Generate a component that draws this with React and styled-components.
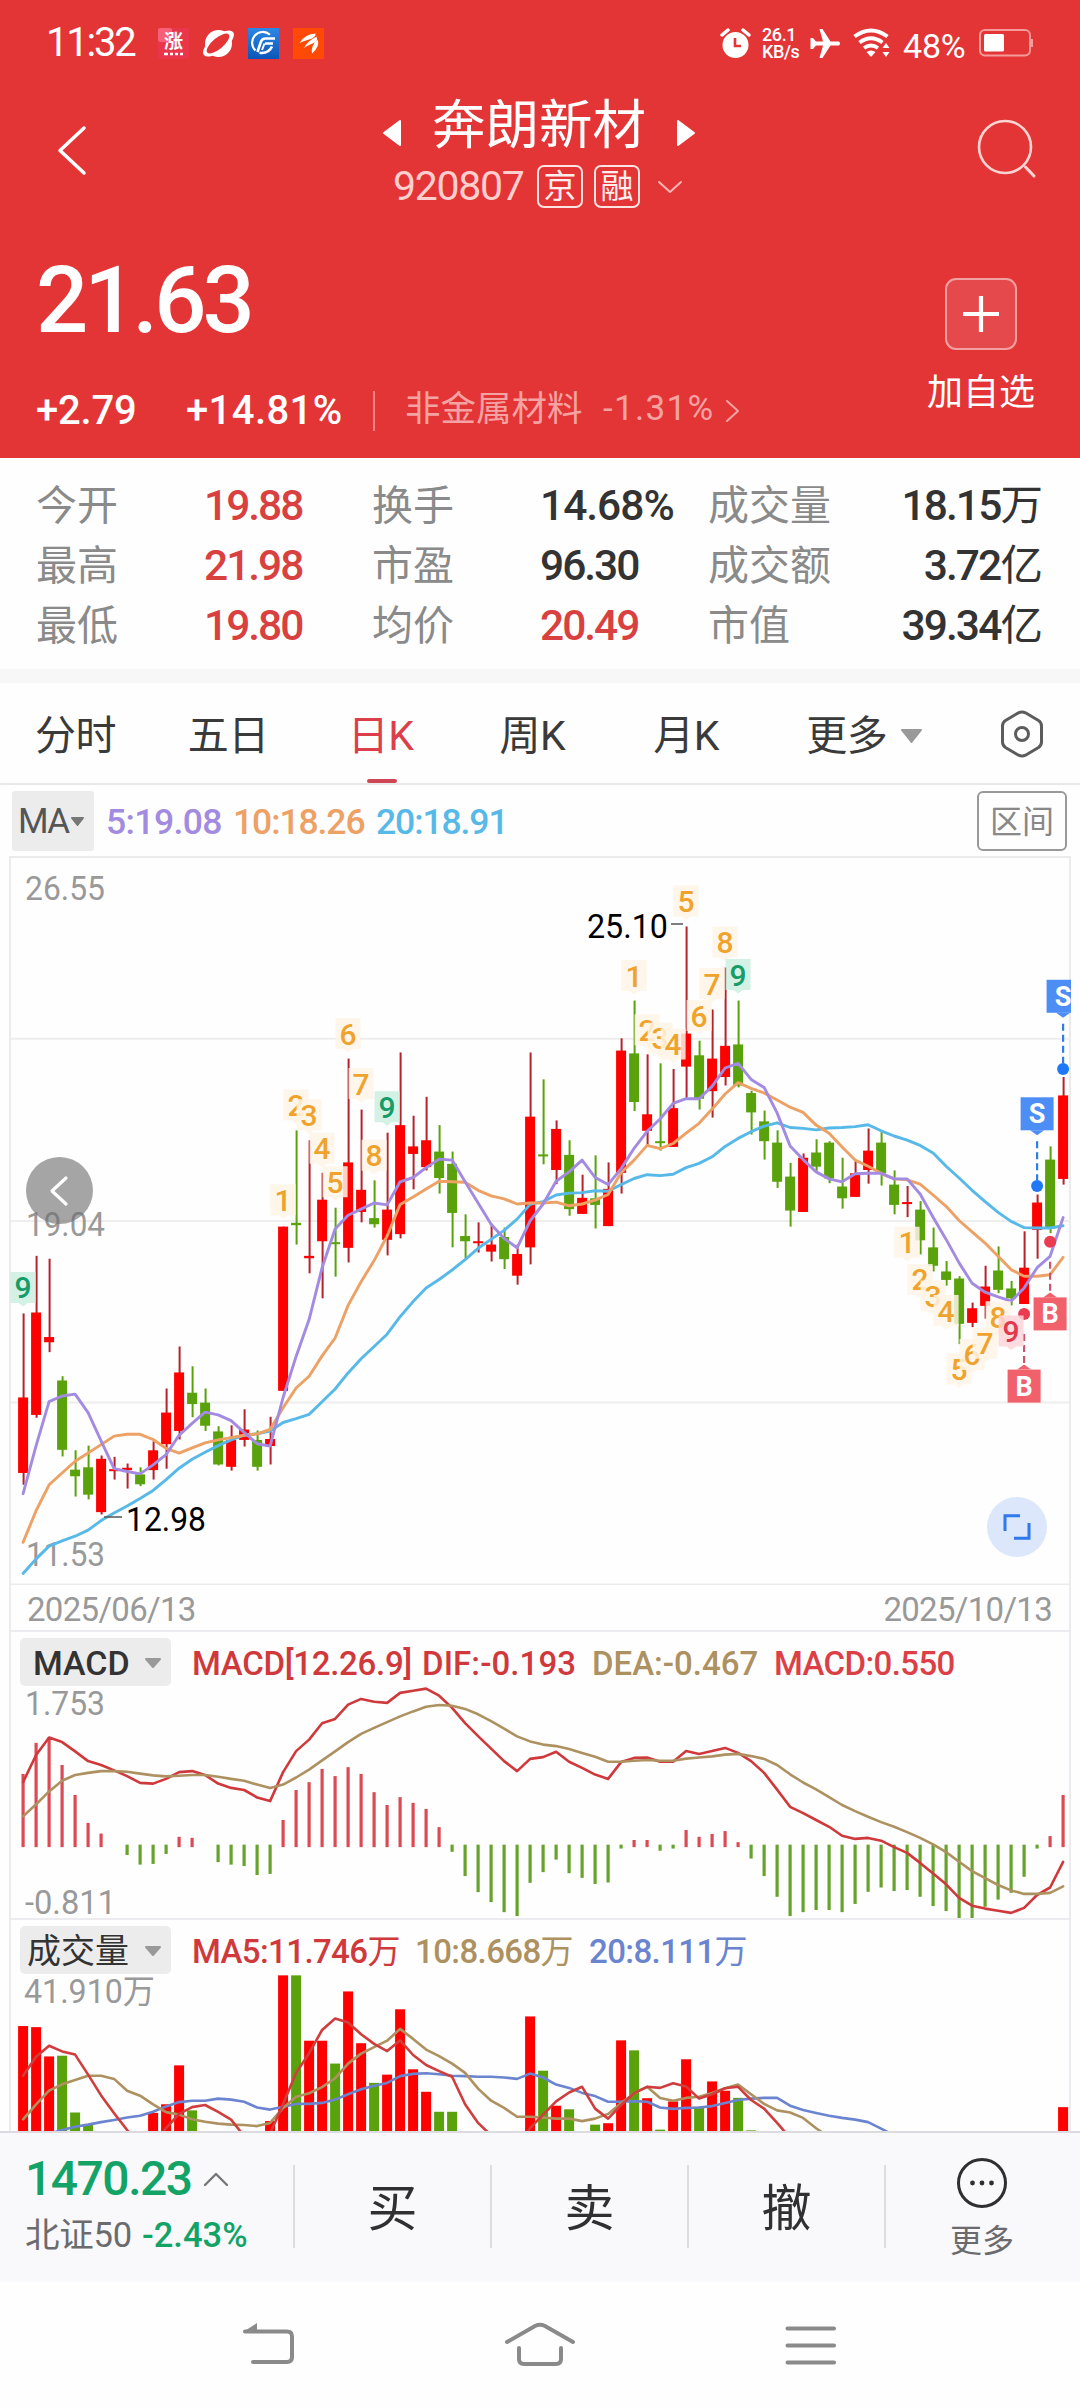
import React from "react";
import styled, { createGlobalStyle, css } from "styled-components";

const UP = "#fe0000";
const DOWN = "#5aa20b";
const RED = "#d8413f";
const GREY = "#999";
const MA5 = "#a28be0";
const MA10 = "#eda164";
const MA20 = "#57b9e8";
const OLIVE = "#ad9160";
const FONT = 'Roboto, "Noto Sans CJK SC", sans-serif';

const GlobalStyle = createGlobalStyle`
  body { margin: 0; background: #fefefe; }
  * { box-sizing: border-box; }
  svg { display: block; flex: none; }
  button { all: unset; box-sizing: border-box; display: block; }
`;

const type = css`
  font-size: ${(p) => p.$size}px;
  font-weight: ${(p) => p.$weight || 400};
  letter-spacing: ${(p) => p.$ls || 0}px;
  color: ${(p) => p.$color || "inherit"};
  white-space: nowrap;
`;

const Page = styled.div`
  width: 1080px;
  height: 2408px;
  display: flex;
  flex-direction: column;
  font-family: ${FONT};
  background: #fefefe;
  overflow: hidden;
`;
const Unit = styled.span`
  font-weight: 400;
`;

/* ---------- header ---------- */
const Header = styled.header`
  height: 458px;
  background: #e33536;
  color: #fff;
`;
const StatusBar = styled.div`
  height: 86px;
  padding: 0 47px 0 46px;
  display: flex;
  align-items: center;
  justify-content: space-between;
`;
const StatusGroup = styled.div`
  display: flex;
  align-items: center;
  gap: ${(p) => p.$gap}px;
`;
const Clock = styled.span`
  ${type}
  width: 98px;
  line-height: 40px;
`;
const NetSpeed = styled.span`
  width: 37px;
  display: flex;
  flex-direction: column;
  font-size: 18px;
  font-weight: 500;
  line-height: 17px;
  letter-spacing: -0.4px;
  white-space: nowrap;
`;
const Percent = styled.span`
  ${type}
  line-height: 40px;
  padding-top: 6px;
  width: 65px;
`;
const TitleRow = styled.div`
  height: 136px;
  padding: 0 45px 0 54px;
  display: flex;
`;
const TitleSide = styled.div`
  width: 58px;
  padding-top: ${(p) => p.$top}px;
`;
const TitleBlock = styled.div`
  flex: 1;
  padding-top: 2px;
  padding-right: 11px;
  display: flex;
  flex-direction: column;
  align-items: center;
`;
const NameRow = styled.div`
  height: 74px;
  display: flex;
  align-items: center;
  gap: 31px;
`;
const Name = styled.h1`
  margin: 0;
  line-height: 74px;
  padding-top: 2px;
  ${type}
`;
const ArrowSlot = styled.div`
  padding-top: 16px;
`;
const CodeRow = styled.div`
  height: 48px;
  padding-right: 2px;
  display: flex;
  align-items: center;
  color: #ffcfce;
`;
const Code = styled.span`
  ${type}
  line-height: 48px;
  width: 144px;
`;
const Badge = styled.span`
  width: 46px;
  height: 43px;
  margin-right: 11px;
  border: 2px solid #ffe3e2;
  border-radius: 7px;
  font-size: 33px;
  line-height: 39px;
  color: #ffeeed;
  text-align: center;
`;
const QuoteRow = styled.div`
  display: flex;
  justify-content: space-between;
  padding: 0 44px 0 36px;
`;
const Quote = styled.div`
  padding-top: 29px;
`;
const Price = styled.div`
  ${type}
  line-height: 100px;
`;
const ChangeRow = styled.div`
  margin-top: 34px;
  height: 52px;
  display: flex;
  align-items: center;
`;
const Change = styled.span`
  ${type}
  width: ${(p) => p.$w}px;
  line-height: 52px;
`;
const Sector = styled.span`
  ${type}
  width: ${(p) => p.$w}px;
  margin-left: ${(p) => p.$gap || 0}px;
  padding-bottom: 4px;
  line-height: 48px;
  color: #f5a3a2;
`;
const Rule = styled.i`
  width: 2px;
  height: ${(p) => p.$h}px;
  background: ${(p) => p.$tone};
`;
const AddBox = styled.div`
  padding-top: 56px;
  width: 110px;
  display: flex;
  flex-direction: column;
  align-items: center;
`;
const AddIcon = styled.div`
  width: 72px;
  height: 72px;
  border: 2px solid #f1a1a0;
  border-radius: 11px;
  background: #e6494b;
  display: grid;
  place-items: center;
`;
const AddLabel = styled.span`
  ${type}
  line-height: 50px;
  margin-top: 18px;
`;

/* ---------- stats ---------- */
const Stats = styled.section`
  height: 211px;
  padding: 18px 39px 0 36px;
  display: grid;
  grid-template-columns: 168px 168px 168px 168px 1fr;
  grid-auto-rows: 60px;
`;
const StatLabel = styled.span`
  ${type}
  line-height: 60px;
`;
const StatValue = styled.span`
  ${type}
  line-height: 60px;
`;
const LastCell = styled.div`
  display: flex;
  justify-content: space-between;
`;
const Band = styled.div`
  height: 14px;
  background: #f7f7f7;
`;

/* ---------- tabs ---------- */
const Tabs = styled.nav`
  height: 102px;
  padding: 0 36px 0 35px;
  display: flex;
  border-bottom: 2px solid #e8e8e8;
`;
const Tab = styled.div`
  width: ${(p) => p.$w}px;
  display: flex;
  flex-direction: column;
  justify-content: space-between;
  align-items: flex-start;
  color: ${(p) => (p.$on ? "#dc3f49" : "#3a3a3a")};
  font-size: 41px;
  letter-spacing: -0.5px;
`;
const TabText = styled.span`
  height: 96px;
  padding-top: 9px;
  line-height: 60px;
  display: flex;
  align-items: center;
  gap: 14px;
  white-space: nowrap;
`;
const Underline = styled.i`
  width: 30px;
  height: 4px;
  margin-left: 19px;
  border-radius: 2px;
  background: #cf4653;
`;
const TabIcon = styled.div`
  padding-top: 27px;
`;

/* ---------- chart blocks ---------- */
const MaRow = styled.div`
  height: 71px;
  padding: 0 13px 0 12px;
  display: flex;
  align-items: center;
`;
const MaSelect = styled.div`
  width: 82px;
  height: 60px;
  padding: 2px 0 0 6px;
  display: flex;
  align-items: center;
  gap: 2px;
  background: #ececec;
  border-radius: 3px;
  color: #555;
  font-size: 35px;
  letter-spacing: -1.5px;
`;
const MaValue = styled.span`
  ${type}
  width: ${(p) => p.$w}px;
  margin-left: 12px;
  padding-top: 2px;
  line-height: 60px;
`;
const RangeButton = styled.button`
  margin-left: auto;
  width: 90px;
  height: 60px;
  border: 2px solid #999;
  border-radius: 6px;
  font-size: 32px;
  line-height: 58px;
  text-align: center;
  color: #888;
`;
const KPanel = styled.section`
  position: relative;
  height: 729px;
`;
const PrevButton = styled.button`
  position: absolute;
  left: 26px;
  top: 301px;
  width: 67px;
  height: 67px;
  border-radius: 50%;
  background: rgba(110, 110, 110, 0.62);
  display: grid;
  place-items: center;
`;
const ExpandButton = styled.button`
  position: absolute;
  left: 987px;
  top: 641px;
  width: 60px;
  height: 60px;
  border-radius: 50%;
  background: #dce7fb;
  display: grid;
  place-items: center;
`;
const Framed = styled.div`
  margin: 0 9px 0 9px;
  border: solid #ececf0;
  border-width: 0 2px 0 2px;
`;
const DateRow = styled(Framed)`
  height: 47px;
  padding: 2px 17px 0 16px;
  display: flex;
  justify-content: space-between;
  border-bottom-width: 2px;
  font-size: 33px;
  line-height: 45px;
  letter-spacing: -0.7px;
  color: ${GREY};
`;
const IndicatorHead = styled.div`
  height: 55px;
  padding: 4px 0 0 9px;
  display: flex;
  align-items: center;
`;
const Chip = styled.div`
  width: 151px;
  height: 48px;
  margin-right: 21px;
  padding: 3px 10px 0 ${(p) => p.$pad}px;
  display: flex;
  align-items: center;
  justify-content: space-between;
  background: #ececec;
  border-radius: 5px;
  color: #333;
  font-size: 34px;
  font-weight: ${(p) => p.$weight || 400};
  line-height: 44px;
  white-space: nowrap;
`;
const IndicatorValue = styled.span`
  ${type}
  width: ${(p) => p.$w}px;
  padding-top: 4px;
  line-height: 44px;
`;
const Indicator = styled(Framed)`
  height: ${(p) => p.$h}px;
  border-bottom-width: ${(p) => (p.$line ? 2 : 0)}px;
  overflow: hidden;
`;
const Plot = styled.div`
  height: ${(p) => p.$h}px;
  margin: 0 -11px;
`;

/* ---------- bottom ---------- */
const TradeBar = styled.footer`
  height: 151px;
  border-top: 2px solid #dcdce0;
  background: #f9f9fb;
  display: flex;
  align-items: flex-start;
`;
const IndexBox = styled.div`
  width: 293px;
  padding: 15px 0 0 25px;
`;
const IndexRow = styled.div`
  height: ${(p) => p.$h}px;
  display: flex;
  align-items: center;
`;
const IndexText = styled.span`
  ${type}
  width: ${(p) => p.$w}px;
  line-height: 50px;
`;
const BarRule = styled(Rule)`
  margin-top: 32px;
`;
const Action = styled.button`
  width: 195px;
  line-height: 152px;
  font-size: 50px;
  color: #303033;
  text-align: center;
`;
const MoreBox = styled.div`
  flex: 1;
  padding-top: 24px;
  padding-right: 2px;
  display: flex;
  flex-direction: column;
  align-items: center;
  font-size: 32px;
  color: #6b6b6e;
  line-height: 44px;
  gap: 10px;
`;
const NavBar = styled.div`
  height: 126px;
  display: flex;
  justify-content: space-between;
  padding: 39px 243px 0 241px;
`;

/* ---------- data ---------- */
const STEP = 13;
const X0 = 23.1;
const px = (i) => X0 + i * STEP;
const KY = (v) => v * 0.47194 - 6;

// high, body top, body bottom, low, rising
const candles = [
  [982,1160,1320,1345,1],[860,980,1197,1203,1],[866,1032,1043,1064,1],[1115,1124,1271,1285,0],[1272,1313,1327,1370,0],
  [1262,1308,1366,1376,0],[1283,1290,1403,1408,1],[1286,1312,1316,1334,1],[1300,1309,1314,1353,1],[1308,1323,1344,1348,0],
  [1253,1272,1314,1334,1],[1141,1192,1259,1311,1],[1052,1107,1231,1249,1],[1094,1150,1174,1202,0],[1141,1171,1220,1231,0],
  [1221,1232,1302,1304,0],[1219,1250,1307,1315,1],[1185,1228,1250,1264,1],[1230,1250,1307,1315,0],[1201,1248,1263,1302,1],
  [798,798,1146,1146,1],[594,790,795,836,0],[615,860,865,897,1],[684,741,829,950,1],[758,831,834,904,0],
  [442,662,843,874,1],[550,720,767,789,1],[700,780,793,800,0],[599,762,826,859,1],[429,583,814,823,1],
  [563,628,644,719,1],[523,615,672,679,1],[583,639,695,728,0],[639,665,769,842,0],[772,818,829,865,0],
  [789,829,832,853,1],[792,836,851,872,1],[800,820,867,888,0],[836,856,902,921,1],[429,565,842,878,1],
  [486,645,648,666,0],[573,591,678,708,1],[615,646,761,775,0],[688,737,771,771,1],[647,738,752,802,0],
  [662,718,797,797,1],[399,425,684,728,1],[319,431,534,553,0],[433,560,595,627,1],[452,617,621,637,0],
  [464,547,629,629,1],[162,389,459,525,1],[404,435,527,550,0],[338,442,511,567,1],[249,415,481,499,1],
  [319,412,499,503,0],[510,515,556,603,0],[552,575,617,656,0],[594,620,703,716,0],[663,692,764,798,0],
  [643,652,767,767,1],[613,641,671,680,0],[617,620,696,706,0],[652,713,738,760,0],[659,685,735,735,1],
  [590,637,678,707,1],[598,620,686,711,0],[679,709,752,772,0],[712,746,750,778,1],[744,762,827,857,0],
  [800,842,881,893,0],[871,893,911,923,0],[903,908,1004,1047,0],[959,971,1002,1011,1],[881,925,966,993,1],
  [840,891,932,939,0],[913,929,950,965,0],[808,885,962,962,1],[730,747,805,866,1],[628,656,802,812,0],[481,520,697,709,1],
];
const ma5 = [1364,1262,1169,1157,1153,1192,1252,1311,1317,1322,1303,1281,1240,1215,1191,1197,1209,1234,1258,1263,1160,1073,995,885,803,774,761,748,752,703,694,673,655,657,703,748,793,823,843,786,750,702,682,657,694,709,675,632,596,570,537,527,527,501,462,452,486,503,557,627,656,682,697,703,686,685,685,697,697,729,778,825,875,918,937,947,956,928,885,861,779];
const ma10 = [1467,1400,1345,1320,1295,1278,1260,1242,1238,1238,1249,1268,1278,1267,1256,1250,1245,1240,1237,1228,1182,1140,1115,1072,1034,965,915,870,818,751,735,718,702,703,704,721,733,739,750,748,748,746,754,750,742,730,684,657,626,633,622,600,579,549,517,493,505,515,530,545,556,583,600,629,657,670,685,697,699,708,731,755,785,809,833,861,889,903,903,900,863];
const ma20 = [1533,1502,1475,1464,1454,1441,1421,1405,1390,1374,1357,1334,1310,1291,1276,1262,1250,1240,1237,1231,1213,1205,1196,1169,1142,1108,1078,1052,1026,989,957,928,910,890,868,844,825,806,782,751,745,731,727,726,722,723,709,696,688,690,687,673,664,650,628,611,597,585,578,588,590,593,589,588,586,582,595,606,615,626,642,670,695,721,745,768,787,800,801,801,796];

// index, centre, digit, tone
const tags = [
  [0,928,"9","g"],[20,742,"1"],[21,541,"2"],[22,562,"3"],[23,633,"4"],[24,704,"5"],[25,390,"6"],[26,496,"7"],[27,648,"8"],[28,545,"9","g"],
  [47,267,"1"],[48,382,"2"],[49,400,"3"],[50,412,"4"],[51,109,"5"],[52,352,"6"],[53,284,"7"],[54,196,"8"],[55,265,"9","g"],
  [68,832,"1"],[69,911,"2"],[70,946,"3"],[71,977,"4"],[72,1100,"5"],[73,1070,"6"],[74,1046,"7"],[75,990,"8"],
];
const tones = {
  g: ["#ccefe0", "#169c66"],
  r: ["#ffd3d8", "#e0384c"],
  o: ["#fef4e6", "#efa22c"],
};

const DY = (v) => v / 2.8 - 107;
const macdBars = [543,456,441,518,602,680,710,null,770,797,795,767,719,722,null,790,797,801,826,823,672,588,566,529,549,524,543,594,630,608,624,641,692,761,829,874,902,930,941,848,818,783,821,834,851,847,752,728,728,758,752,700,719,711,703,734,780,829,887,941,930,924,924,930,907,873,861,871,868,887,913,927,955,952,915,895,876,831,752,717,602];
const dif = [566,490,441,454,480,507,518,533,549,568,570,557,538,535,546,570,582,588,609,619,538,479,447,401,389,349,333,341,344,316,310,304,324,358,401,437,472,507,535,501,496,481,509,526,545,557,510,498,497,509,509,479,487,479,470,484,507,540,587,635,653,672,691,716,725,722,730,748,764,792,822,852,890,912,920,926,932,918,882,861,789];
const dea = [662,628,592,562,546,540,535,535,537,542,547,550,548,546,546,551,557,562,573,582,573,553,531,505,480,454,431,414,398,382,368,355,350,352,361,376,395,416,438,452,461,465,473,484,495,509,509,506,504,506,506,500,497,494,489,487,493,501,518,544,567,586,608,630,647,663,678,691,706,722,740,762,789,815,835,854,869,879,879,876,858];

const VY = (v) => v / 2.8 - 395;
const volumes = {
  0:[1249,1],1:[1252,1],2:[1334,1],3:[1332,0],4:[1491,0],5:[1525,0],10:[1492,1],11:[1468,1],12:[1359,1],13:[1485,0],
  19:[1515,1],20:[1107,1],21:[1107,0],22:[1290,1],23:[1290,1],24:[1354,0],25:[1152,1],26:[1297,1],27:[1408,0],28:[1385,1],
  29:[1202,1],30:[1370,1],31:[1433,1],32:[1489,0],33:[1489,0],39:[1222,1],40:[1374,0],41:[1472,1],42:[1482,0],44:[1525,0],
  45:[1521,1],46:[1289,1],47:[1317,0],48:[1451,1],49:[1539,0],50:[1460,1],51:[1342,1],52:[1475,0],53:[1404,1],54:[1430,1],
  55:[1450,0],56:[1541,0],80:[1476,1],
};
const vol5 = [1388,1335,1304,1320,1329,1385,1443,1493,1540,1580,1575,1535,1495,1476,1470,1489,1511,1557,1600,1550,1467,1380,1325,1260,1228,1239,1272,1299,1319,1289,1330,1358,1375,1391,1468,1520,1555,1590,1600,1535,1497,1460,1435,1419,1480,1508,1470,1437,1419,1422,1409,1418,1452,1440,1423,1419,1456,1480,1520,1562];
const vol10 = [1510,1468,1430,1412,1400,1388,1388,1397,1430,1444,1468,1490,1497,1510,1517,1522,1525,1526,1529,1520,1478,1447,1437,1420,1395,1354,1326,1308,1290,1257,1285,1315,1333,1354,1380,1424,1458,1478,1503,1503,1505,1508,1508,1515,1508,1495,1465,1437,1419,1450,1458,1450,1447,1436,1423,1413,1440,1467,1485,1491,1506,1535,1560];
const vol20 = [1570,1560,1550,1540,1531,1525,1518,1512,1505,1500,1489,1474,1462,1458,1458,1452,1455,1461,1477,1483,1475,1467,1467,1464,1455,1440,1426,1416,1408,1389,1383,1381,1384,1388,1389,1391,1391,1393,1397,1382,1393,1413,1422,1436,1445,1461,1461,1459,1461,1477,1481,1478,1477,1473,1464,1456,1452,1450,1450,1472,1484,1492,1500,1506,1511,1518,1536,1555];

function Line({ values, y, color, w = 2.9 }) {
  const pts = values.map((v, i) => `${px(i).toFixed(1)},${y(v).toFixed(1)}`).join(" ");
  return <polyline points={pts} fill="none" stroke={color} strokeWidth={w} strokeLinejoin="round" strokeLinecap="round" />;
}

function AxisText({ x, y, children, color = GREY, w, size = 33 }) {
  return (
    <text x={x} y={y + size * 0.357} fontFamily={FONT} fontSize={size} fill={color} textLength={w} lengthAdjust="spacingAndGlyphs">
      {children}
    </text>
  );
}

function Tag({ i, v, label, tone }) {
  const [bg, fg] = tones[tone || "o"];
  const x = px(i);
  const y = KY(v);
  return (
    <g>
      <path d={`M${x - 12.5} ${y - 16}h25v31h-8l-4.500 3.500l-4.500-3.500h-8z`} fill={bg} fillOpacity=".85" />
      <text x={x} y={y + 10.500} textAnchor="middle" fontFamily={FONT} fontSize="30" fontWeight="500" fill={fg}>{label}</text>
    </g>
  );
}

function Signal({ i, box, dot, sell }) {
  const x = px(i);
  const top = KY(box);
  const d = KY(dot);
  const color = sell ? "#4c8df6" : "#f1616c";
  const edge = sell ? top + 33 : top;
  return (
    <g>
      <line x1={x} x2={x} y1={sell ? edge + 11 : d + 20} y2={sell ? d - 6 : edge - 6} stroke={sell ? "#2f7be8" : "#c95570"} strokeWidth="2.200" strokeDasharray="7 4" />
      <circle cx={x} cy={d} r="6" fill={sell ? "#1f78f5" : "#ea3b50"} />
      <rect x={x - 16.5} y={top} width="33" height="33" fill={color} />
      <path d={sell ? `M${x - 7} ${edge}h14l-7 5z` : `M${x - 7} ${edge}h14l-7-5z`} fill={color} />
      <text x={x} y={top + 26} textAnchor="middle" fontFamily={FONT} fontSize="27" fontWeight="700" fill="#fff">{sell ? "S" : "B"}</text>
    </g>
  );
}

function KChart() {
  return (
    <svg width="1080" height="729" viewBox="0 0 1080 729">
      <defs>
        <clipPath id="frame"><rect x="10" y="0" width="1061" height="729" /></clipPath>
      </defs>
      <g stroke="#ebebeb" strokeWidth="2" fill="none">
        <path d="M10 1H1070V728.500H10z" />
        <path d="M10 182.800H1070M10 365H1070M10 546.600H1070" stroke="#eee" />
      </g>
      <AxisText x={25} y={32} w={80}>26.55</AxisText>
      <AxisText x={26} y={368} w={79}>19.04</AxisText>
      <AxisText x={26} y={698} w={79}>11.53</AxisText>
      {candles.map(([h, t, b, l, up], i) => {
        const c = up ? UP : DOWN;
        return (
          <g key={i}>
            <line x1={px(i) + 0.5} x2={px(i) + 0.5} y1={KY(h)} y2={KY(l)} stroke={up ? "#b5222b" : DOWN} strokeWidth="2" />
            <rect x={px(i) - 5} y={KY(t)} width="10" height={Math.max(2, KY(b) - KY(t))} fill={c} />
          </g>
        );
      })}
      <Line values={ma20} y={KY} color={MA20} />
      <Line values={ma10} y={KY} color={MA10} />
      <Line values={ma5} y={KY} color={MA5} />
      {tags.map(([i, v, label, tone]) => <Tag key={i} i={i} v={v} label={label} tone={tone} />)}
      <g clipPath="url(#frame)">
        <Signal i={80} box={275} dot={464} sell />
        <Signal i={78} box={524} dot={712} sell />
        <Signal i={79} box={948} dot={830} />
        <Signal i={77} box={1101} dot={983} />
      </g>
      <Tag i={76} v={1020} label="9" tone="r" />
      <path d="M104 661H122M671 68H683" stroke="#555" strokeWidth="1.500" />
      <AxisText x={126} y={663} w={80} color="#000">12.98</AxisText>
      <AxisText x={587} y={70} w={81} color="#000">25.10</AxisText>
    </svg>
  );
}

function MacdChart() {
  return (
    <svg width="1080" height="233" viewBox="0 0 1080 233" overflow="visible">
      <AxisText x={25} y={16.5} w={80}>1.753</AxisText>
      <AxisText x={25} y={215.5} w={91}>-0.811</AxisText>
      {macdBars.map((v, i) => v && (
        <line key={i} x1={px(i)} x2={px(i)} y1={DY(v > 745 ? 741 : 748)} y2={DY(v)} stroke={v > 745 ? "#67a32c" : "#dc4b55"} strokeWidth="3.200" />
      ))}
      <Line values={dif} y={DY} color="#d0393b" w={2.6} />
      <Line values={dea} y={DY} color={OLIVE} w={2.6} />
    </svg>
  );
}

function VolumeChart() {
  return (
    <svg width="1080" height="156" viewBox="0 0 1080 156">
      <AxisText x={24} y={16} w={131}>41.910万</AxisText>
      {Object.entries(volumes).map(([i, [v, up]]) => (
        <rect key={i} x={px(+i) - 5} y={VY(v)} width="10" height={160 - VY(v)} fill={up ? UP : DOWN} />
      ))}
      <Line values={vol20} y={VY} color="#6b84cf" w={2.6} />
      <Line values={vol10} y={VY} color={OLIVE} w={2.6} />
      <Line values={vol5} y={VY} color="#cf3d3d" w={2.6} />
    </svg>
  );
}

/* ---------- icons ---------- */
const Triangle = ({ w, h, dir, color }) => {
  const d = { left: `M${w - 1} 1V${h - 1}L1 ${h / 2}z`, right: `M1 1V${h - 1}L${w - 1} ${h / 2}z`, down: `M1 1H${w - 1}L${w / 2} ${h - 1}z` }[dir];
  return <svg width={w} height={h}><path d={d} fill={color} stroke={color} strokeWidth="2" strokeLinejoin="round" /></svg>;
};
const Chevron = ({ w, h, d, color, sw = 2 }) => (
  <svg width={w} height={h} overflow="visible"><path d={d} fill="none" stroke={color} strokeWidth={sw} strokeLinecap="round" strokeLinejoin="round" /></svg>
);
const RiseIcon = () => (
  <svg width="31" height="31">
    <rect width="31" height="31" fill="#ea364a" rx="2" />
    <rect width="14" height="14" fill="#f8607a" rx="2" />
    <text x="15.500" y="19.500" fontFamily={FONT} fontSize="19" fontWeight="700" fill="#fff" textAnchor="middle">涨</text>
    <path d="M6 26h4M12 26h3M17 26h3M22 26h3" stroke="#fff" strokeWidth="2.400" />
  </svg>
);
const PlanetIcon = () => (
  <svg width="31" height="31">
    <circle cx="15.500" cy="15.500" r="13.500" fill="#fff" />
    <ellipse cx="15.500" cy="15.500" rx="18.500" ry="8" transform="rotate(-38 15.500 15.500)" fill="#fff" />
    <ellipse cx="15" cy="15.500" rx="14" ry="5.500" transform="rotate(-40 15 15.500)" fill="#e33536" />
  </svg>
);
const BlueIcon = () => (
  <svg width="31" height="31">
    <defs><linearGradient id="blue" x2="0" y2="1"><stop stopColor="#2d87e4" /><stop offset="1" stopColor="#0b56b8" /></linearGradient></defs>
    <rect width="31" height="31" fill="url(#blue)" />
    <path d="M22 6.800A10.500 10.500 0 0 0 7.500 22.500" fill="none" stroke="#fff" strokeWidth="2.200" />
    <path d="M27 10.500H17.500Q14 10.500 12.800 14L9.500 24M25 15.500h-8M11.500 24.800Q20.500 26 24 18.500" fill="none" stroke="#fff" strokeWidth="2.600" />
    <path d="M16.500 15.500L14 22" fill="none" stroke="#fff" strokeWidth="2" />
  </svg>
);
const OrangeIcon = () => (
  <svg width="31" height="31">
    <rect width="31" height="31" fill="#ff4a06" />
    <path d="M6.500 15Q12 6 22.500 5.500Q23 9.500 16 11.500Q10 13 6.500 15zM11 20Q14 13.500 23.500 8.500Q25.500 13 19.500 15.500Q14.500 17.500 11 20zM19 25.500Q17.500 18 24.500 11.500Q27.500 18 19 25.500z" fill="#fff" />
  </svg>
);
const AlarmIcon = () => (
  <svg width="31" height="31">
    <circle cx="15.500" cy="17" r="13" fill="#fff" />
    <path d="M2 7L8 2M29 7L23 2" stroke="#fff" strokeWidth="3.500" strokeLinecap="round" />
    <path d="M15 10v8h6" fill="none" stroke="#e33536" strokeWidth="2.600" />
  </svg>
);
const PlaneIcon = () => (
  <svg width="31" height="31">
    <path d="M29 13.500H20.500L12.500 1H9.500L13 13.500H6L3 10H.500V21H3L6 17.500H13L9.500 30H12.500L20.500 17.500H29Q31 15.500 29 13.500z" fill="#fff" />
  </svg>
);
const WifiIcon = () => (
  <svg width="40" height="30">
    <g fill="none" stroke="#fff" strokeWidth="3.800">
      <path d="M2.500 8.500Q19 -3.500 35.500 8.500" />
      <path d="M7.500 14.500Q19 6 30.500 14.500" />
      <path d="M12 20Q19 15 26 20" />
    </g>
    <path d="M14.500 24Q19 21 23.500 24L19 29z" fill="#fff" />
    <path d="M34 15l3.500 5h-7zM34 29l3.500-5h-7z" fill="#fff" />
  </svg>
);
const BatteryIcon = () => (
  <svg width="54" height="28">
    <rect x="1" y="1" width="50" height="25.500" rx="5" fill="none" stroke="#f59c9b" strokeWidth="2" />
    <rect x="5" y="5" width="20" height="17.500" rx="1.500" fill="#fff" />
    <path d="M53 10v8" stroke="#f59c9b" strokeWidth="2" />
  </svg>
);

const statRows = [
  ["今开", "19.88", RED, "换手", "14.68%", "#333", "成交量", "18.15", "万"],
  ["最高", "21.98", RED, "市盈", "96.30", "#333", "成交额", "3.72", "亿"],
  ["最低", "19.80", RED, "均价", "20.49", RED, "市值", "39.34", "亿"],
];

export default function App() {
  return (
    <Page>
      <GlobalStyle />
      <Header>
        <StatusBar>
          <StatusGroup $gap={14}>
            <Clock $size={40} $ls={-2.2}>11:32</Clock>
            <RiseIcon /><PlanetIcon /><BlueIcon /><OrangeIcon />
          </StatusGroup>
          <StatusGroup $gap={11}>
            <AlarmIcon />
            <NetSpeed><span>26.1</span><span>KB/s</span></NetSpeed>
            <PlaneIcon /><WifiIcon />
            <Percent $size={34} $ls={-0.2}>48%</Percent>
            <BatteryIcon />
          </StatusGroup>
        </StatusBar>
        <TitleRow>
          <TitleSide $top={40}>
            <Chevron w={32} h={50} d="M30 2L6 24.500L30 47" color="#fff" sw={3.5} />
          </TitleSide>
          <TitleBlock>
            <NameRow>
              <ArrowSlot><Triangle w={18} h={26} dir="left" color="#fff" /></ArrowSlot>
              <Name $size={53.5}>奔朗新材</Name>
              <ArrowSlot><Triangle w={18} h={26} dir="right" color="#fff" /></ArrowSlot>
            </NameRow>
            <CodeRow>
              <Code $size={41} $ls={-1.3}>920807</Code>
              <Badge>京</Badge>
              <Badge>融</Badge>
              <Chevron w={32} h={13} d="M8 2L19 12L30 2" color="#ffb5b4" />
            </CodeRow>
          </TitleBlock>
          <TitleSide $top={32}>
            <svg width="60" height="62">
              <circle cx="28" cy="29" r="26" fill="none" stroke="#ffd5d4" strokeWidth="2.600" />
              <path d="M48.500 49L57 58" stroke="#ffd5d4" strokeWidth="3" strokeLinecap="round" />
            </svg>
          </TitleSide>
        </TitleRow>
        <QuoteRow>
          <Quote>
            <Price $size={92} $weight={500} $ls={-4}>21.63</Price>
            <ChangeRow>
              <Change $size={40} $weight={500} $ls={-0.2} $w={150}>+2.79</Change>
              <Change $size={40} $weight={500} $ls={0.4} $w={187}>+14.81%</Change>
              <Rule $h={40} $tone="#ee8483" />
              <Sector $size={35.5} $gap={30} $w={198}>非金属材料</Sector>
              <Sector $size={35} $w={123} $ls={1.3}>-1.31%</Sector>
              <Chevron w={14} h={22} d="M1 1L12 11L1 21" color="#f5a3a2" />
            </ChangeRow>
          </Quote>
          <AddBox>
            <AddIcon>
              <svg width="36" height="36"><path d="M0 18H36M18 0V36" stroke="#fff" strokeWidth="4.200" /></svg>
            </AddIcon>
            <AddLabel $size={36}>加自选</AddLabel>
          </AddBox>
        </QuoteRow>
      </Header>

      <Stats>
        {statRows.map(([a, b, bc, c, d, dc, e, f, unit]) => (
          <React.Fragment key={a}>
            <StatLabel $size={41} $color="#8a8a8a">{a}</StatLabel>
            <StatValue $size={42.5} $weight={500} $ls={-2} $color={bc}>{b}</StatValue>
            <StatLabel $size={41} $color="#8a8a8a">{c}</StatLabel>
            <StatValue $size={42.5} $weight={500} $ls={d.endsWith("%") ? -1 : -2} $color={dc}>{d}</StatValue>
            <LastCell>
              <StatLabel $size={41} $color="#8a8a8a">{e}</StatLabel>
              <StatValue $size={42.5} $weight={500} $ls={-1.9} $color="#333">{f}<Unit>{unit}</Unit></StatValue>
            </LastCell>
          </React.Fragment>
        ))}
      </Stats>
      <Band />

      <Tabs>
        <Tab $w={153}><TabText>分时</TabText></Tab>
        <Tab $w={160}><TabText>五日</TabText></Tab>
        <Tab $w={152} $on><TabText>日K</TabText><Underline /></Tab>
        <Tab $w={154}><TabText>周K</TabText></Tab>
        <Tab $w={153}><TabText>月K</TabText></Tab>
        <Tab $w={194}><TabText>更多 <Triangle w={21} h={14} dir="down" color="#999" /></TabText></Tab>
        <TabIcon>
          <svg width="44" height="48">
            <path d="M18.500 2.800Q22 1 25.500 2.800L38.500 10.500Q41.500 12.500 41.500 16V32Q41.500 35.500 38.500 37.500L25.500 45.200Q22 47 18.500 45.200L5.500 37.500Q2.500 35.500 2.500 32V16Q2.500 12.500 5.500 10.500z" fill="none" stroke="#5c5c5c" strokeWidth="3" />
            <circle cx="22" cy="24" r="6.500" fill="none" stroke="#5c5c5c" strokeWidth="3" />
          </svg>
        </TabIcon>
      </Tabs>

      <MaRow>
        <MaSelect>MA<Triangle w={13} h={9} dir="down" color="#777" /></MaSelect>
        <MaValue $size={35.5} $ls={-0.6} $weight={500} $color={MA5} $w={115}>5:19.08</MaValue>
        <MaValue $size={35.5} $ls={-1.1} $weight={500} $color={MA10} $w={131}>10:18.26</MaValue>
        <MaValue $size={35.5} $ls={-1.1} $weight={500} $color={MA20} $w={140}>20:18.91</MaValue>
        <RangeButton>区间</RangeButton>
      </MaRow>

      <KPanel>
        <PrevButton>
          <Chevron w={18} h={28} d="M15 1L1 14L15 27" color="#fff" sw={3.2} />
        </PrevButton>
        <KChart />
        <ExpandButton>
          <svg width="28" height="26"><path d="M17 1.800H2V17M26 9V24.200H11" fill="none" stroke="#2f78ee" strokeWidth="3" /></svg>
        </ExpandButton>
      </KPanel>
      <DateRow><span>2025/06/13</span><span>2025/10/13</span></DateRow>

      <Indicator $h={288} $line>
        <IndicatorHead>
          <Chip $pad={13} $weight={500}>MACD<Triangle w={16} h={10} dir="down" color="#999" /></Chip>
          <IndicatorValue $size={33} $weight={500} $ls={-0.3} $color="#d0393b" $w={230}>MACD[12.26.9]</IndicatorValue>
          <IndicatorValue $size={33} $weight={500} $ls={0.1} $color="#d0393b" $w={170}>DIF:-0.193</IndicatorValue>
          <IndicatorValue $size={33} $weight={500} $color={OLIVE} $w={182}>DEA:-0.467</IndicatorValue>
          <IndicatorValue $size={33} $weight={500} $ls={-0.6} $color="#dc4047" $w={190}>MACD:0.550</IndicatorValue>
        </IndicatorHead>
        <Plot $h={233}><MacdChart /></Plot>
      </Indicator>
      <Indicator $h={211}>
        <IndicatorHead>
          <Chip $pad={7}>成交量<Triangle w={16} h={10} dir="down" color="#999" /></Chip>
          <IndicatorValue $size={33} $weight={500} $ls={-0.6} $color="#d0393b" $w={223}>MA5:11.746<Unit>万</Unit></IndicatorValue>
          <IndicatorValue $size={33} $weight={500} $ls={-0.6} $color={OLIVE} $w={174}>10:8.668<Unit>万</Unit></IndicatorValue>
          <IndicatorValue $size={33} $weight={500} $ls={-0.6} $color="#6b84cf" $w={170}>20:8.111<Unit>万</Unit></IndicatorValue>
        </IndicatorHead>
        <Plot $h={156}><VolumeChart /></Plot>
      </Indicator>

      <TradeBar>
        <IndexBox>
          <IndexRow $h={62}>
            <IndexText $size={48} $weight={500} $ls={-1.5} $color="#13a367" $w={179}>1470.23</IndexText>
            <Chevron w={24} h={14} d="M1 13L12 2L23 13" color="#77777a" sw={2.4} />
          </IndexRow>
          <IndexRow $h={50}>
            <IndexText $size={34.5} $color="#6b6b6e" $w={117} $ls={-0.2}>北证50</IndexText>
            <IndexText $size={34.5} $weight={500} $color="#13a367" $w={110}>-2.43%</IndexText>
          </IndexRow>
        </IndexBox>
        <BarRule $h={83} $tone="#dddde0" />
        <Action>买</Action>
        <BarRule $h={83} $tone="#dddde0" />
        <Action>卖</Action>
        <BarRule $h={83} $tone="#dddde0" />
        <Action>撤</Action>
        <BarRule $h={83} $tone="#dddde0" />
        <MoreBox>
          <svg width="52" height="52">
            <circle cx="26" cy="26" r="23.500" fill="none" stroke="#2f2f33" strokeWidth="3" />
            <g fill="#2f2f33"><circle cx="16.500" cy="26" r="2.400" /><circle cx="26" cy="26" r="2.400" /><circle cx="35.500" cy="26" r="2.400" /></g>
          </svg>
          <span>更多</span>
        </MoreBox>
      </TradeBar>

      <NavBar>
        <svg width="54" height="46">
          <path d="M4 10.500H46Q51 10.500 51 15.500V36Q51 41 46 41H12" fill="none" stroke="#8a8a8a" strokeWidth="4" strokeLinecap="round" />
          <path d="M2 11L16 2V11z" fill="#8a8a8a" />
        </svg>
        <svg width="72" height="46">
          <g fill="none" stroke="#8a8a8a" strokeWidth="4" strokeLinecap="round">
            <path d="M3 21L31 5Q36 2.500 41 5L69 21" />
            <path d="M15 27V38Q15 43 20 43H52Q57 43 57 38V27" />
          </g>
        </svg>
        <svg width="52" height="46">
          <path d="M2.500 7.500H49M2.500 24.500H49M2.500 41.500H49" stroke="#8a8a8a" strokeWidth="4" strokeLinecap="round" />
        </svg>
      </NavBar>
    </Page>
  );
}
